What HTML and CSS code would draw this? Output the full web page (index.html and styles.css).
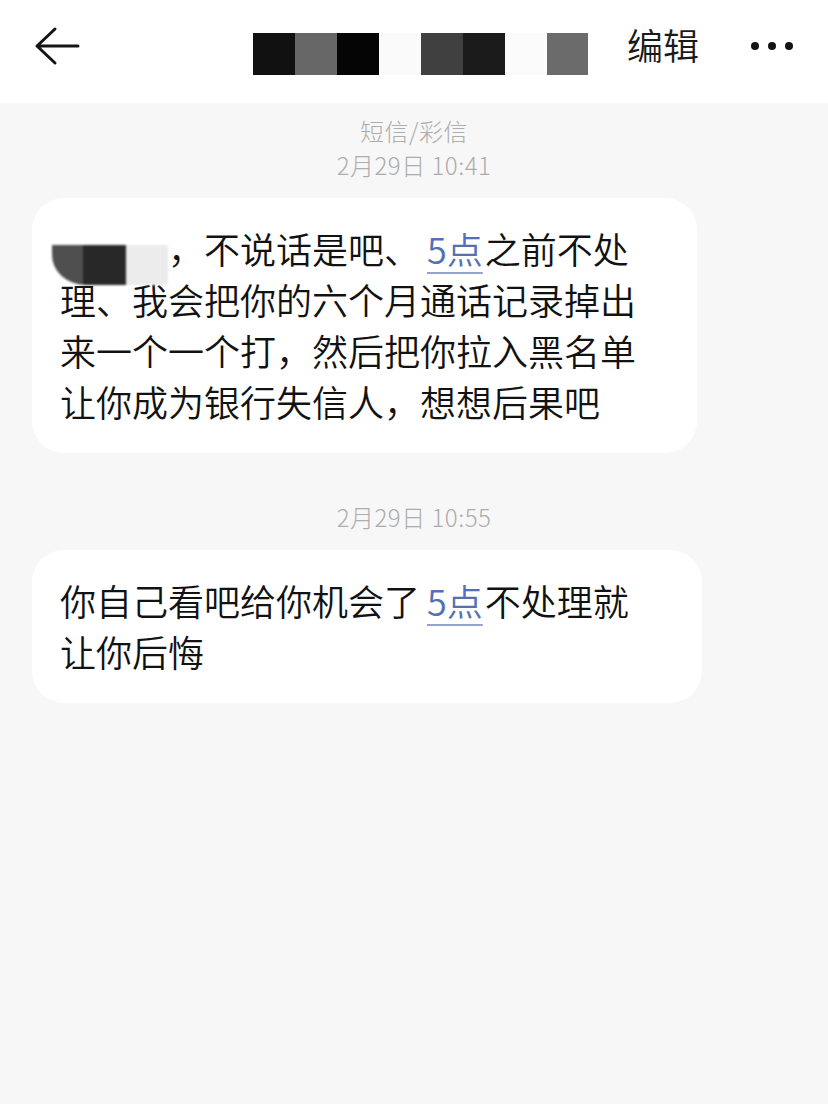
FILE: index.html
```html
<!DOCTYPE html>
<html lang="zh-CN">
<head>
<meta charset="utf-8">
<title>短信</title>
<link rel="stylesheet" href="styles.css">
</head>
<body>
<header class="topbar">
  <svg class="back" width="46" height="40" viewBox="0 0 46 40" aria-label="返回">
    <path d="M44 20 H3 M21 3 L3 20 L21 37" fill="none" stroke="#141414" stroke-width="3" stroke-linecap="round" stroke-linejoin="round"/>
  </svg>
  <div class="title-mask">
    <span class="px c1"></span><span class="px c2"></span><span class="px c3"></span><span class="px c4"></span><span class="px c5"></span><span class="px c6"></span><span class="px c7"></span><span class="px c8"></span>
  </div>
  <span class="edit">编辑</span>
  <span class="more"><i></i><i></i><i></i></span>
</header>

<main class="thread">
  <div class="meta meta-first">
    <div>短信/彩信</div>
    <div>2月29日 10:41</div>
  </div>
  <div class="bubble bubble-one">
    <span class="name-mask"></span>，不说话是吧、<span class="link">5点</span>之前不处<br>理、我会把你的六个月通话记录掉出<br>来一个一个打，然后把你拉入黑名单<br>让你成为银行失信人，想想后果吧
  </div>

  <div class="meta meta-second">
    <div>2月29日 10:55</div>
  </div>
  <div class="bubble bubble-two">
    你自己看吧给你机会了<span class="link">5点</span>不处理就<br>让你后悔
  </div>
</main>
</body>
</html>
```

FILE: styles.css
```css
html, body {
  margin: 0;
  padding: 0;
}
body {
  width: 828px;
  min-height: 1104px;
  background: #f7f7f7;
  font-family: "Noto Sans CJK SC", "Noto Sans", sans-serif;
  color: #121212;
}

.topbar {
  height: 103px;
  background: #ffffff;
  display: flex;
  align-items: flex-start;
}
.back {
  display: block;
  margin-left: 34px;
  margin-top: 26px;
}
.title-mask {
  display: flex;
  margin-left: 173px;
  margin-top: 33px;
  height: 42px;
}
.px {
  display: block;
  width: 42px;
  height: 42px;
}
.c1 { background: #111111; }
.c2 { background: #676767; }
.c3 { background: #050505; }
.c4 { background: #fafafa; }
.c5 { background: #404040; }
.c6 { background: #1b1b1b; }
.c7 { background: #fbfbfb; }
.c8 { background: #6b6b6b; width: 41px; }

.edit {
  margin-left: 39px;
  margin-top: 24px;
  font-size: 36px;
  line-height: 40px;
  font-weight: 350;
  color: #1a1a1a;
}
.more {
  display: flex;
  gap: 9px;
  margin-left: 52px;
  margin-top: 42px;
}
.more i {
  display: block;
  width: 8px;
  height: 8px;
  border-radius: 50%;
  background: #141414;
}

.thread {
  padding: 0 32px;
}
.meta {
  text-align: center;
  font-size: 24px;
  line-height: 34px;
  font-weight: 300;
  color: #adadad;
  letter-spacing: 0.5px;
}
.meta-first {
  padding-top: 11px;
  margin-bottom: 16px;
}
.meta-second {
  margin-top: 47px;
  margin-bottom: 16px;
}

.bubble {
  box-sizing: border-box;
  background: #ffffff;
  border-radius: 32px;
  padding: 25px 28px 26px;
  font-size: 36px;
  line-height: 51px;
  font-weight: 350;
  white-space: nowrap;
}
.bubble-one { width: 665px; }
.bubble-two { width: 670px; }

.link {
  color: #5470b5;
  text-decoration: underline;
  text-decoration-color: #93a3d2;
  text-decoration-thickness: 2px;
  text-underline-offset: 8px;
  margin-left: 7px;
  margin-right: 2px;
}

.name-mask {
  display: inline-block;
  width: 116px;
  height: 40px;
  margin-left: -8px;
  margin-bottom: -12px;
  vertical-align: -9px;
  background: linear-gradient(90deg, #4f4f4f 0 31px, #282828 31px 74px, #ececec 74px 116px);
  border-bottom-left-radius: 34px 30px;
  filter: blur(0.8px);
}
```
